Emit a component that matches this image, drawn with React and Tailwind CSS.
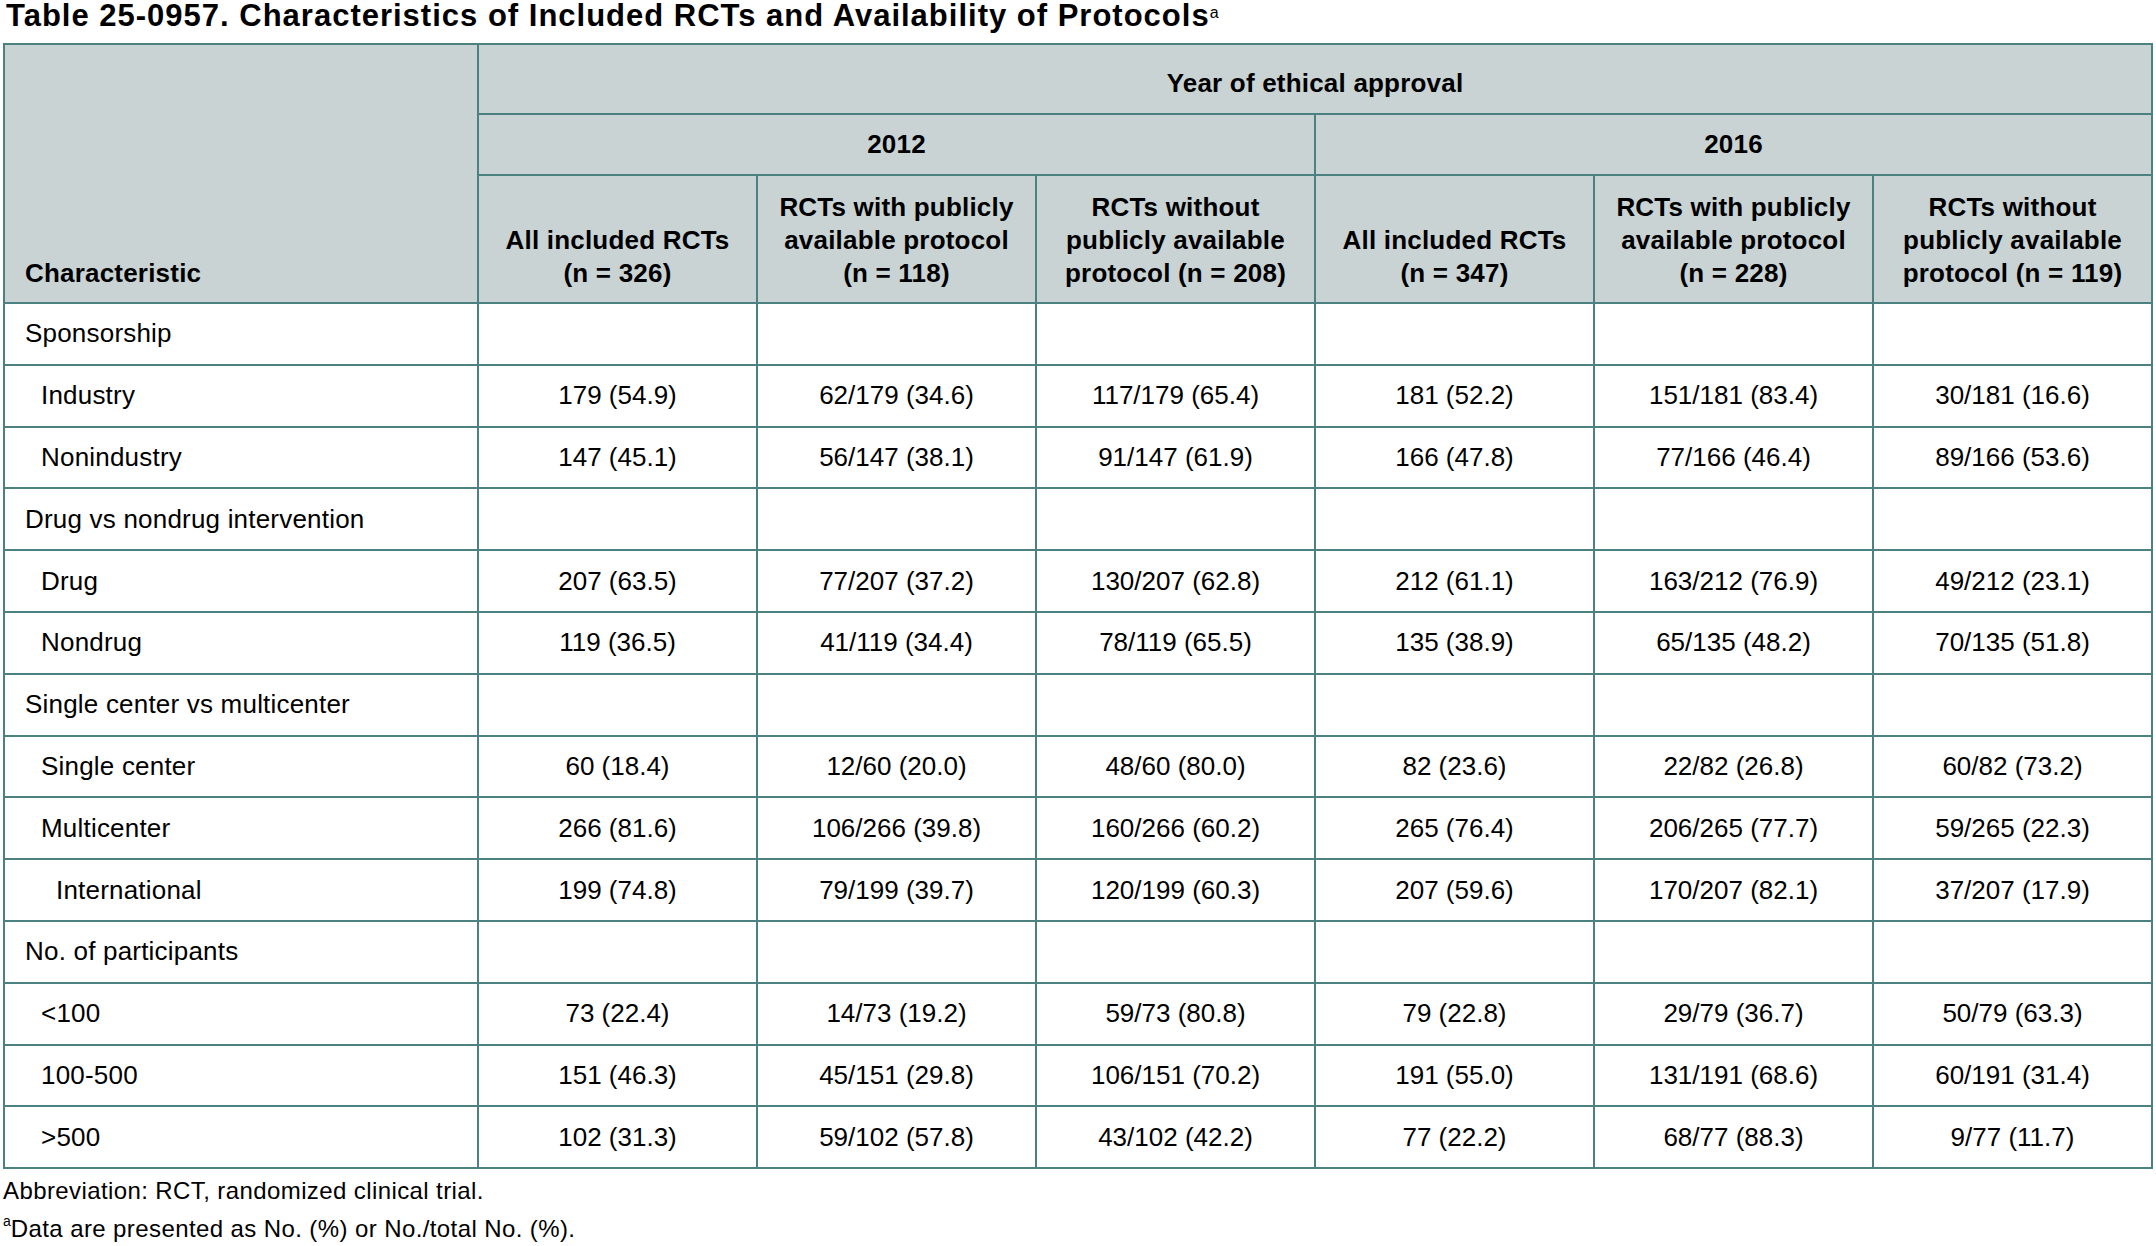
import React from "react";

const rows = [
  { label: "Sponsorship", level: 0 },
  { label: "Industry", level: 1, values: ["179 (54.9)", "62/179 (34.6)", "117/179 (65.4)", "181 (52.2)", "151/181 (83.4)", "30/181 (16.6)"] },
  { label: "Nonindustry", level: 1, values: ["147 (45.1)", "56/147 (38.1)", "91/147 (61.9)", "166 (47.8)", "77/166 (46.4)", "89/166 (53.6)"] },
  { label: "Drug vs nondrug intervention", level: 0 },
  { label: "Drug", level: 1, values: ["207 (63.5)", "77/207 (37.2)", "130/207 (62.8)", "212 (61.1)", "163/212 (76.9)", "49/212 (23.1)"] },
  { label: "Nondrug", level: 1, values: ["119 (36.5)", "41/119 (34.4)", "78/119 (65.5)", "135 (38.9)", "65/135 (48.2)", "70/135 (51.8)"] },
  { label: "Single center vs multicenter", level: 0 },
  { label: "Single center", level: 1, values: ["60 (18.4)", "12/60 (20.0)", "48/60 (80.0)", "82 (23.6)", "22/82 (26.8)", "60/82 (73.2)"] },
  { label: "Multicenter", level: 1, values: ["266 (81.6)", "106/266 (39.8)", "160/266 (60.2)", "265 (76.4)", "206/265 (77.7)", "59/265 (22.3)"] },
  { label: "International", level: 2, values: ["199 (74.8)", "79/199 (39.7)", "120/199 (60.3)", "207 (59.6)", "170/207 (82.1)", "37/207 (17.9)"] },
  { label: "No. of participants", level: 0 },
  { label: "<100", level: 1, values: ["73 (22.4)", "14/73 (19.2)", "59/73 (80.8)", "79 (22.8)", "29/79 (36.7)", "50/79 (63.3)"] },
  { label: "100-500", level: 1, values: ["151 (46.3)", "45/151 (29.8)", "106/151 (70.2)", "191 (55.0)", "131/191 (68.6)", "60/191 (31.4)"] },
  { label: ">500", level: 1, values: ["102 (31.3)", "59/102 (57.8)", "43/102 (42.2)", "77 (22.2)", "68/77 (88.3)", "9/77 (11.7)"] },
];

const colHeads = [
  ["All included RCTs", "(n = 326)"],
  ["RCTs with publicly", "available protocol", "(n = 118)"],
  ["RCTs without", "publicly available", "protocol (n = 208)"],
  ["All included RCTs", "(n = 347)"],
  ["RCTs with publicly", "available protocol", "(n = 228)"],
  ["RCTs without", "publicly available", "protocol (n = 119)"],
];

const indent = ["pl-[20px]", "pl-[36px]", "pl-[51px]"];
const cell = "border-2 border-[#4b8181]";

export default function App() {
  return (
    <div className="min-h-screen bg-white text-black font-['Liberation_Sans',Arial,sans-serif]">
      {/* title */}
      <div className="pl-[6px] text-[31px] font-bold leading-none tracking-[1px]">
        Table 25-0957. Characteristics of Included RCTs and Availability of Protocols
        <span className="relative top-[5px] align-top text-[16px] font-normal leading-none tracking-normal">a</span>
      </div>

      <table className="mt-[12px] ml-[3px] w-[2150px] table-fixed border-collapse text-[26px]">
        <colgroup>
          <col className="w-[474px]" />
          {colHeads.map((_, i) => (
            <col key={i} className="w-[279px]" />
          ))}
        </colgroup>
        <thead className="bg-[#c9d3d4] font-bold tracking-[0.2px]">
          <tr className="h-[70px]">
            <th rowSpan={3} className={`${cell} align-bottom text-left pl-[20px] pb-[12px] leading-[33px]`}>
              Characteristic
            </th>
            <th colSpan={6} className={`${cell} align-middle pt-[8px]`}>
              Year of ethical approval
            </th>
          </tr>
          <tr className="h-[61px]">
            <th colSpan={3} className={`${cell} align-middle`}>2012</th>
            <th colSpan={3} className={`${cell} align-middle`}>2016</th>
          </tr>
          <tr className="h-[128px]">
            {colHeads.map((lines, i) => (
              <th key={i} className={`${cell} align-bottom pb-[12px] leading-[33px]`}>
                {lines.map((l, j) => (
                  <div key={j}>{l}</div>
                ))}
              </th>
            ))}
          </tr>
        </thead>
        <tbody>
          {rows.map((r, i) => (
            <tr key={i} className="h-[61.8px]">
              <td className={`${cell} ${indent[r.level]} text-left tracking-[0.2px]`}>{r.label}</td>
              {colHeads.map((_, j) => (
                <td key={j} className={`${cell} text-center`}>
                  {r.values ? r.values[j] : ""}
                </td>
              ))}
            </tr>
          ))}
        </tbody>
      </table>

      <div className="mt-[3px] pl-[3px] text-[24px] leading-[38px] tracking-[0.4px]">
        <p>Abbreviation: RCT, randomized clinical trial.</p>
        <p>
          <span className="relative top-[4px] align-top text-[14px] leading-none tracking-normal">a</span>Data are presented as No. (%) or No./total No. (%).
        </p>
      </div>
    </div>
  );
}
